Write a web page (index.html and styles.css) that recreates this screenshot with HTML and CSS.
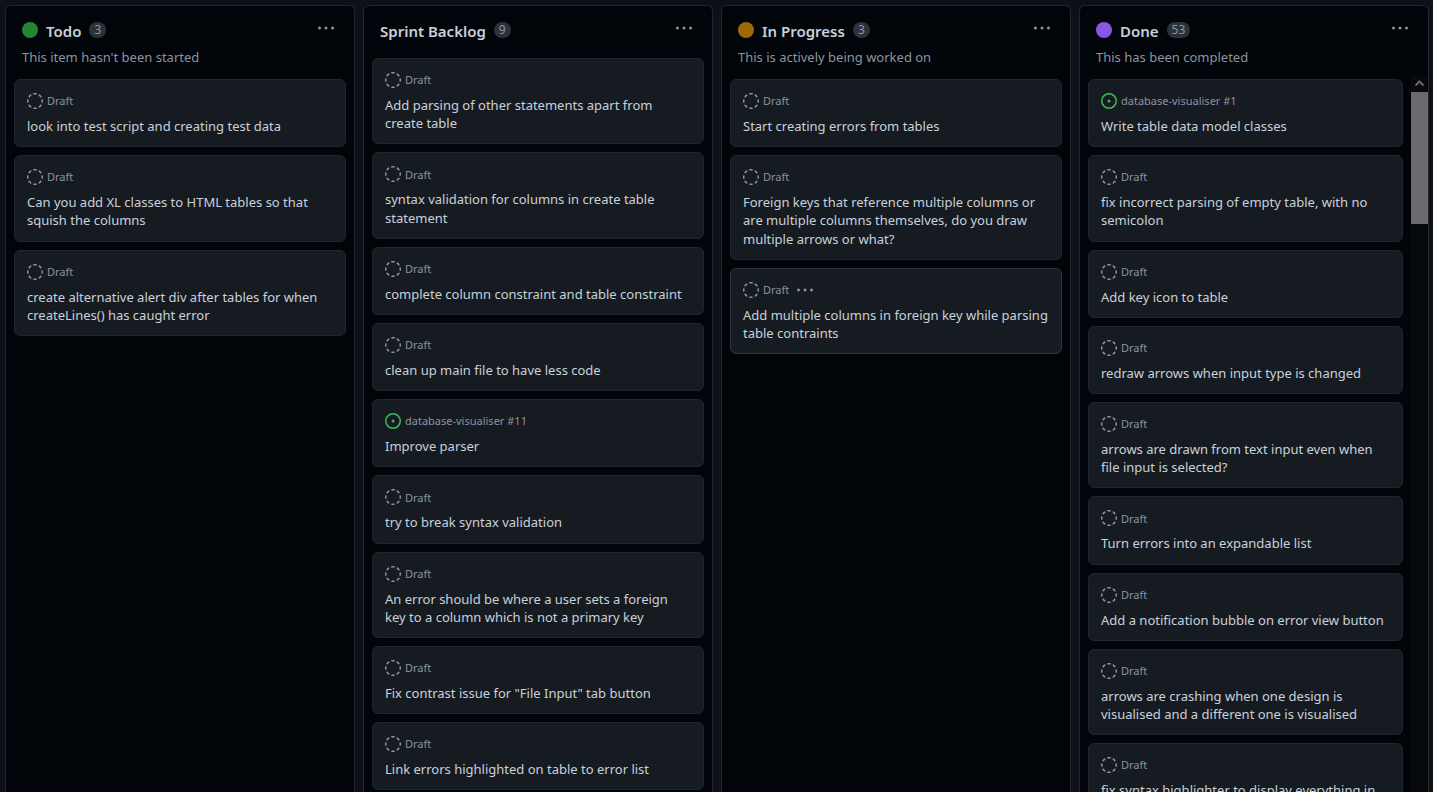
FILE: index.html
```
<!DOCTYPE html>
<html lang="en">
<head>
<meta charset="utf-8">
<title>Project board</title>
<link rel="stylesheet" href="styles.css">
</head>
<body>
<svg class="sprite" aria-hidden="true">
  <symbol id="draft" viewBox="0 0 16 16"><circle cx="8" cy="8" r="7.25" fill="none" stroke="currentColor" stroke-width="1.5" stroke-linecap="round" pathLength="80" stroke-dasharray="4 6" stroke-dashoffset="2"/></symbol>
  <symbol id="open" viewBox="0 0 16 16"><path fill="currentColor" d="M8 9.5a1.5 1.5 0 1 0 0-3 1.5 1.5 0 0 0 0 3Z"/><circle cx="8" cy="8" r="7.25" fill="none" stroke="currentColor" stroke-width="1.5"/></symbol>
  <symbol id="dots" viewBox="0 0 18 4"><g fill="currentColor"><circle cx="2.5" cy="2" r="1.5"/><circle cx="9" cy="2" r="1.5"/><circle cx="15.5" cy="2" r="1.5"/></g></symbol>
</svg>
<main class="board" id="board"></main>
<script src="board.js"></script>
</body>
</html>
```
FILE: board.js
```
const columns = [
  { name: "Todo", dot: "green", count: 3, about: "This item hasn't been started", cards: [
    "look into test script and creating test data",
    "Can you add XL classes to HTML tables so that squish the columns",
    "create alternative alert div after tables for when createLines() has caught error"
  ]},
  { name: "Sprint Backlog", count: 9, cards: [
    "Add parsing of other statements apart from create table",
    "syntax validation for columns in create table statement",
    "complete column constraint and table constraint",
    "clean up main file to have less code",
    { text: "Improve parser", issue: "database-visualiser #11" },
    "try to break syntax validation",
    "An error should be where a user sets a foreign key to a column which is not a primary key",
    "Fix contrast issue for \"File Input\" tab button",
    "Link errors highlighted on table to error list"
  ]},
  { name: "In Progress", dot: "amber", count: 3, about: "This is actively being worked on", cards: [
    "Start creating errors from tables",
    "Foreign keys that reference multiple columns or are multiple columns themselves, do you draw multiple arrows or what?",
    { text: "Add multiple columns in foreign key while parsing table contraints", active: true }
  ]},
  { name: "Done", dot: "purple", count: 53, about: "This has been completed", scroll: true, cards: [
    { text: "Write table data model classes", issue: "database-visualiser #1" },
    "fix incorrect parsing of empty table, with no semicolon",
    "Add key icon to table",
    "redraw arrows when input type is changed",
    "arrows are drawn from text input even when file input is selected?",
    "Turn errors into an expandable list",
    "Add a notification bubble on error view button",
    "arrows are crashing when one design is visualised and a different one is visualised",
    "fix syntax highlighter to display everything in"
  ]}
];

const icon = (id, cls) => `<svg class="${cls}" aria-hidden="true"><use href="#${id}"/></svg>`;

function cardHtml(entry) {
  const card = typeof entry === "string" ? { text: entry } : entry;
  const mark = card.issue ? icon("open", "icon icon-open") : icon("draft", "icon");
  const menu = card.active ? `<button class="card-menu" aria-label="Card options">${icon("dots", "dots")}</button>` : "";
  return `<li class="card${card.active ? " card-active" : ""}">
    <div class="meta">${mark}<span>${card.issue || "Draft"}</span>${menu}</div>
    <a class="card-title" href="#">${card.text}</a></li>`;
}

document.getElementById("board").innerHTML = columns.map(c => `
  <section class="column">
    <header class="head">
      <div class="head-row">
        ${c.dot ? `<span class="status ${c.dot}"></span>` : ""}
        <h2 class="name">${c.name}</h2><span class="count">${c.count}</span>
        <button class="menu" aria-label="${c.name} options">${icon("dots", "dots")}</button>
      </div>
      ${c.about ? `<p class="about">${c.about}</p>` : ""}
    </header>
    <div class="body">
      <ul class="cards">${c.cards.map(cardHtml).join("")}</ul>
      ${c.scroll ? `<div class="track"><svg class="arrow" viewBox="0 0 17 17" aria-hidden="true"><path d="M4.5 10.5 8.5 6.5l4 4" fill="none" stroke="currentColor" stroke-width="2"/></svg><div class="thumb"></div></div>` : ""}
    </div>
  </section>`).join("");
```
FILE: styles.css
```
* { box-sizing: border-box; }
body { margin: 0; background: #0d1117; color: #c9d1d9; font: 13px/1.4 "Noto Sans", sans-serif; }
button { padding: 0; border: 0; background: none; color: #8b949e; display: flex; align-items: center; justify-content: center; cursor: pointer; }
.sprite { position: absolute; width: 0; height: 0; }
.board { display: flex; gap: 8px; height: 100vh; padding: 5px 4px 0 5px; overflow: hidden; }
.column { flex: 1; min-width: 0; display: flex; flex-direction: column; background: #010409; border: 1px solid #21262d; border-bottom: 0; border-radius: 6px 6px 0 0; overflow: hidden; }
.head { flex: none; padding: 14px 16px 7px; }
.head-row { display: flex; align-items: flex-start; height: 22px; margin-bottom: 5px; }
.status { width: 16px; height: 16px; margin: 2px 8px 0 0; border-radius: 50%; }
.green { background: #238636; }
.amber { background: #9e6a03; }
.purple { background: #8957e5; }
.name { margin: 0; font-size: 15px; font-weight: 600; line-height: 22px; }
.count { height: 16px; margin: 2px 0 0 8px; padding: 0 5px; border-radius: 8px; background: #2d3139; color: #8b949e; font-size: 12px; line-height: 16px; }
.menu { width: 24px; height: 16px; margin-left: auto; }
.dots { width: 18px; height: 4px; }
.about { margin: 0; color: #8b949e; line-height: 21px; }
.body { flex: 1; min-height: 0; display: flex; }
.cards { flex: 1; min-width: 0; display: flex; flex-direction: column; gap: 8px; margin: 0; padding: 4px 8px; list-style: none; overflow: hidden; }
.card { flex: none; padding: 12px 12px 11px; background: #161b22; border: 1px solid #21262d; border-radius: 6px; }
.card-active { border-color: #30363d; }
.meta { display: flex; align-items: center; gap: 4px; height: 18px; margin-bottom: 7px; color: #8b949e; font-size: 11px; }
.icon { width: 16px; height: 16px; }
.icon-open { color: #3fb950; }
.card-menu { width: 24px; height: 16px; }
.card-title { display: block; color: inherit; text-decoration: none; }
.track { flex: none; width: 17px; background: #08090d; color: #686868; }
.arrow { display: block; width: 17px; height: 17px; }
.thumb { height: 132px; background: #6b6b6e; }
```
